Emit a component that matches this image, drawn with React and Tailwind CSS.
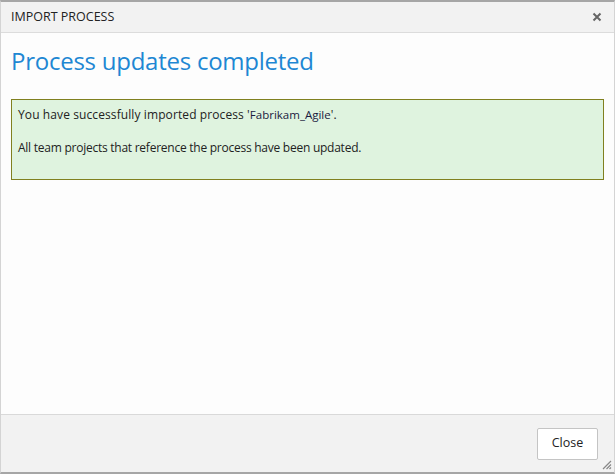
export default function App() {
  return (
    <div className="w-[616px] h-[475px] bg-white" style={{ fontFamily: '"Open Sans", "Noto Sans", sans-serif' }}>
      <div className="flex flex-col w-[615px] h-[474px] border-t-2 border-b-2 border-x border-[#a6a6a6] border-x-[#d4d4d4]">
        {/* header */}
        <div className="flex items-center justify-between h-[31px] pl-[10px] pr-[8px] bg-[#f2f2f2] border-b border-[#dcdcdc] shrink-0">
          <span className="text-[12.5px] text-[#222]">IMPORT PROCESS</span>
          <svg width="10" height="10" viewBox="0 0 10 10" className="mr-[4px]">
            <path d="M1.5 1.5 L8.5 8.5 M8.5 1.5 L1.5 8.5" stroke="#666" strokeWidth="2" />
          </svg>
        </div>

        {/* body */}
        <div className="flex-1 bg-[#fdfdfd] px-[10px]">
          <h1 className="mt-[11px] text-[24px] leading-[33px] text-[#1e87d3] tracking-[-0.25px]">Process updates completed</h1>
          <div className="mt-[22px] h-[81px] bg-[#dff3df] border border-[#80801f] px-[6px] pt-[5px] text-[12px] text-[#222] tracking-[-0.25px]">
            <p className="leading-[20px] tracking-[0.1px]">
              You have successfully imported process '<span className="text-[#1a1a40] text-[11.5px] tracking-[0px]">Fabrikam_Agile</span>'.
            </p>
            <p className="mt-[13px] leading-[20px]">All team projects that reference the process have been updated.</p>
          </div>
        </div>

        {/* footer */}
        <div className="relative flex items-center justify-end h-[58px] pr-[16px] bg-[#f2f2f2] border-t border-[#d9d9d9] shrink-0">
          <button className="w-[61px] h-[32px] bg-white border border-[#c4c4c4] rounded-[2px] text-[12.5px] text-[#222]">Close</button>
          <svg width="12" height="12" viewBox="0 0 12 12" className="absolute right-[2px] bottom-[2px]">
            <path d="M11 3 L3 11 M11 6.5 L6.5 11 M11 9.5 L9.5 11" stroke="#888" strokeWidth="1.2" />
          </svg>
        </div>
      </div>
    </div>
  );
}
